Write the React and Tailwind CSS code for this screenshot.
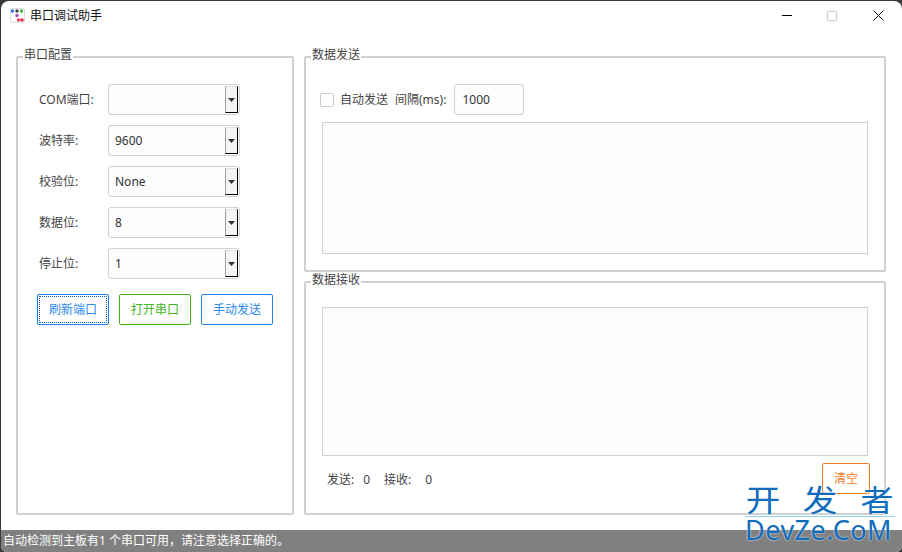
import React from "react";

// Small combo box with the old style arrow button
const Combo = ({ value }) => (
  <div className="w-[132px] h-[31px] flex items-center justify-between pl-[6px] pr-[1px] bg-[#fdfdfd] border border-[#cdd1d8] rounded-[3px] text-[12px] text-[#333333]">
    <span>{value}</span>
    <div className="w-[13px] h-[27px] flex items-center justify-center bg-[#f4f4f4] border-l border-l-[#a0a0a0] border-r border-r-black border-b border-b-black border-t border-t-[#e0e0e0]">
      <svg width="7" height="4" viewBox="0 0 7 4">
        <path d="M0 0H7L3.5 4Z" fill="#333333" />
      </svg>
    </div>
  </div>
);

const Row = ({ label, value }) => (
  <div className="flex items-center">
    <div className="w-[70px] text-[12px] text-[#444444] pl-[1px]">{label}</div>
    <Combo value={value} />
  </div>
);

// Flat outlined button
const Btn = ({ text, className }) => (
  <button className={"w-[72px] h-[31px] bg-white border rounded-[2px] text-[12px] " + className}>
    {text}
  </button>
);

// Group box with the title sitting on the border
const Group = ({ title, className, children }) => (
  <div className={"relative border-2 border-[#d0d0d0] rounded-[2px] " + className}>
    <div className="absolute left-[5px] top-[-11px] bg-white px-[1px] h-[16px] leading-[16px] text-[12px] text-[#444444]">
      {title}
    </div>
    {children}
  </div>
);

const App = () => {
  return (
    <div className="w-[902px] h-[552px] bg-[#3a3a3a] overflow-hidden">
      <div
        className="w-[901px] h-[551px] mt-[1px] ml-[1px] bg-white rounded-t-[8px] rounded-b-[6px] flex flex-col overflow-hidden relative"
        style={{ fontFamily: '"Noto Sans", "Noto Sans CJK SC", sans-serif' }}
      >
        {/* Title bar */}
        <div className="h-[29px] flex items-center shrink-0">
          <svg className="ml-[9px]" width="15" height="15" viewBox="0 0 15 15">
            <rect x="0.5" y="0.5" width="14" height="14" rx="1.5" fill="#ffffff" stroke="#dddddd" />
            <circle cx="2.5" cy="3" r="1.7" fill="#2f7be0" />
            <circle cx="7" cy="3" r="1.7" fill="#444444" />
            <circle cx="11.5" cy="3" r="1.7" fill="#3bb23b" />
            <circle cx="7" cy="7.5" r="1.7" fill="#9b4fc0" />
            <circle cx="8.5" cy="12" r="1.7" fill="#f03a6a" />
            <circle cx="12" cy="12" r="1.7" fill="#ee2244" />
          </svg>
          <span className="ml-[5px] text-[12px] text-[#111111]">串口调试助手</span>
          <div className="ml-auto flex items-center">
            <div className="w-[10px] h-[1px] bg-black" />
            <div className="ml-[35px] w-[10px] h-[10px] border border-[#cccccc] rounded-[1px]" />
            <svg className="ml-[36px] mr-[18px]" width="11" height="11" viewBox="0 0 11 11">
              <path d="M0.5 0.5L10.5 10.5M10.5 0.5L0.5 10.5" stroke="#111111" strokeWidth="1" />
            </svg>
          </div>
        </div>

        {/* Main area */}
        <div className="flex-1 flex gap-[10px] pl-[15px] pr-[15px] pt-[26px] pb-[15px]">
          <Group title="串口配置" className="w-[278px] pt-[26px] pl-[20px]">
            <div className="flex flex-col gap-[10px]">
              <Row label="COM端口:" value="" />
              <Row label="波特率:" value="9600" />
              <Row label="校验位:" value="None" />
              <Row label="数据位:" value="8" />
              <Row label="停止位:" value="1" />
            </div>
            <div className="flex gap-[10px] mt-[15px] -ml-[1px]">
              <button className="w-[72px] h-[31px] p-[1px] bg-white border border-[#1e80e8] rounded-[2px]">
                <div className="w-full h-full flex items-center justify-center border border-dotted border-[#0a5ec0] text-[12px] text-[#2a88ee]">
                  刷新端口
                </div>
              </button>
              <Btn text="打开串口" className="border-[#3fb618] text-[#3fb618]" />
              <Btn text="手动发送" className="border-[#1e80e8] text-[#2a88ee]" />
            </div>
          </Group>

          <div className="w-[582px] flex flex-col gap-[9px]">
            <Group title="数据发送" className="h-[216px] pt-[26px] pl-[14px]">
              <div className="flex items-center h-[31px]">
                <div className="w-[14px] h-[14px] bg-white border border-[#cccccc] rounded-[2px]" />
                <span className="ml-[6px] text-[12px] text-[#444444]">自动发送</span>
                <span className="ml-[7px] text-[12px] text-[#444444]">间隔(ms):</span>
                <div className="ml-[8px] w-[70px] h-[31px] flex items-center pl-[7px] bg-[#fdfdfd] border border-[#cdd1d8] rounded-[3px] text-[12px] text-[#333333]">
                  1000
                </div>
              </div>
              <div className="mt-[7px] w-[546px] h-[132px] ml-[2px] bg-[#fdfdfd] border border-[#cdd1d8]" />
            </Group>

            <Group title="数据接收" className="flex-1 pt-[24px] pl-[16px]">
              <div className="w-[546px] h-[149px] bg-[#fdfdfd] border border-[#cdd1d8]" />
              <div className="flex items-start mt-[7px]">
                <div className="flex text-[12px] text-[#444444] mt-[8px] ml-[5px] leading-[18px]">
                  <span>发送:</span>
                  <span className="ml-[9px]">0</span>
                  <span className="ml-[14px]">接收:</span>
                  <span className="ml-[14px]">0</span>
                </div>
                <button className="ml-auto mr-[14px] w-[48px] h-[31px] bg-white border border-[#f57a20] rounded-[2px] text-[12px] text-[#f57a20]">
                  清空
                </button>
              </div>
            </Group>
          </div>
        </div>

        {/* Status bar */}
        <div className="h-[22px] shrink-0 bg-[#808080] pl-[2px] text-[12px] leading-[21px] text-white">
          自动检测到主板有1 个串口可用，请注意选择正确的。
        </div>

        {/* Site watermark */}
        <div className="absolute left-[744px] top-[483px] w-[150px] flex flex-col text-[#0f6cbd] [text-shadow:0_0_2px_#ffffff]">
          <div className="flex justify-between pl-[3px] pr-[3px] text-[30px] leading-[31px]">
            <span className="inline-block scale-x-[1.15]">开</span>
            <span className="inline-block scale-x-[1.15]">发</span>
            <span className="inline-block scale-x-[1.1]">者</span>
          </div>
          <div className="border-t border-[#8fd0f0] mt-[1px] text-[27px] leading-[26px] tracking-[0.5px] whitespace-nowrap">
            DevZe.CoM
          </div>
        </div>
      </div>
    </div>
  );
};

export default App;
